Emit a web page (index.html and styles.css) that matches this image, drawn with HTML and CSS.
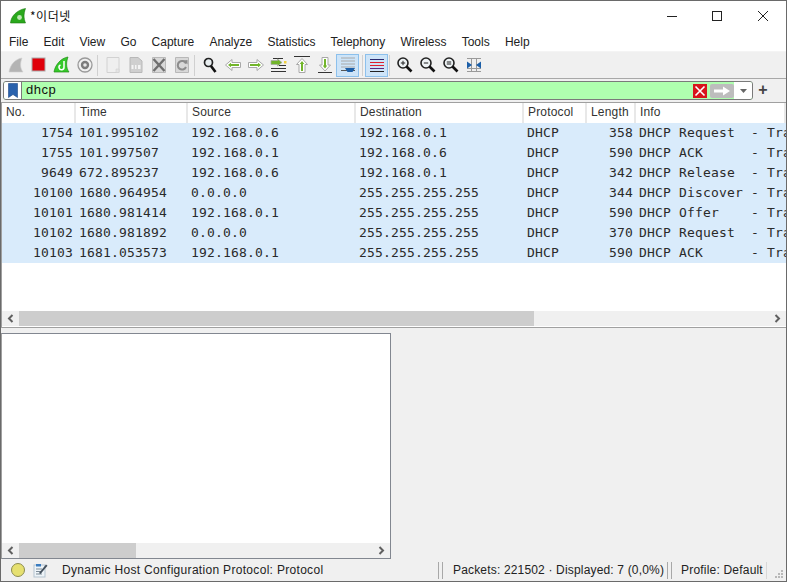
FILE: index.html
```html
<!DOCTYPE html>
<html lang="ko">
<head>
<meta charset="utf-8">
<title>*이더넷</title>
<link rel="stylesheet" href="styles.css">
</head>
<body>
<div class="window">
  <header class="titlebar">
    <svg class="app-icon" width="16" height="16" viewBox="0 0 16 16"><path d="M.5 15C1 8 7 2 15.5 .5C13.5 6 13.5 10 15.5 15Z" fill="#2aa81c" stroke="#1c7a12" stroke-width=".6"/><circle cx="9.5" cy="9.5" r="2.4" fill="#bfe8b5"/></svg>
    <span class="title">*이더넷</span>
    <div class="win-buttons">
      <span class="win-btn"><svg width="10" height="10" viewBox="0 0 10 10"><path d="M0 5.5H10" stroke="#222" fill="none"/></svg></span>
      <span class="win-btn"><svg width="10" height="10" viewBox="0 0 10 10"><rect x=".5" y=".5" width="9" height="9" stroke="#222" fill="none"/></svg></span>
      <span class="win-btn"><svg width="10" height="10" viewBox="0 0 10 10"><path d="M0 0L10 10M10 0L0 10" stroke="#222" fill="none"/></svg></span>
    </div>
  </header>
  <nav class="menubar">
    <span>File</span><span>Edit</span><span>View</span><span>Go</span><span>Capture</span><span>Analyze</span><span>Statistics</span><span>Telephony</span><span>Wireless</span><span>Tools</span><span>Help</span>
  </nav>
  <div class="toolbar">
    <span class="tool"><svg width="18" height="18" viewBox="0 0 18 18"><path d="M2 16C3 9 8 3 15 2C13 7 13 12 16 16Z" fill="#b4b4b4" stroke="#d0d0d0" stroke-width=".6"/></svg></span>
    <span class="tool"><svg width="18" height="18" viewBox="0 0 18 18"><rect x="2" y="2" width="13" height="13" fill="#e0000a" stroke="#a9a9a9"/></svg></span>
    <span class="tool"><svg width="18" height="18" viewBox="0 0 18 18"><path d="M1 16C2 9 8 2 15 1C13 6 13 12 16 16Z" fill="#35c92a" stroke="#1f8a16" stroke-width=".7"/><path d="M11 5V11A2.5 2.5 0 1 1 7.5 9" stroke="#fff" stroke-width="1.5" fill="none"/></svg></span>
    <span class="tool"><svg width="18" height="18" viewBox="0 0 18 18"><circle cx="9" cy="9" r="7" fill="#f0f0f0" stroke="#9a9a9a" stroke-width="1.3"/><circle cx="9" cy="9" r="4.2" fill="#7c7c7c"/><circle cx="9" cy="9" r="1.8" fill="#e8e8e8"/></svg></span>
    <span class="sep"></span>
    <span class="tool"><svg width="18" height="18" viewBox="0 0 18 18"><path d="M3 1.5H15V16.5H3Z" fill="#efefef" stroke="#d2d2d2"/><path d="M12 13H15V16.5H12Z" fill="#e4e4e4" stroke="#d2d2d2" stroke-width=".6"/></svg></span>
    <span class="tool"><svg width="18" height="18" viewBox="0 0 18 18"><path d="M3 1.5H11L15 5V16.5H3Z" fill="#cfcfcf" stroke="#b8b8b8"/><path d="M4.5 9H6.5V13H4.5ZM8 9H9.5V13H8ZM11 9H13.5V13H11Z" fill="#f4f4f4"/></svg></span>
    <span class="tool"><svg width="18" height="18" viewBox="0 0 18 18"><path d="M2.5 1.5H15.5V16.5H2.5Z" fill="#d8d8d8" stroke="#b8b8b8"/><path d="M3.5 3L14.5 15M14.5 3L3.5 15" stroke="#6e6e6e" stroke-width="2.4"/></svg></span>
    <span class="tool"><svg width="18" height="18" viewBox="0 0 18 18"><path d="M2.5 1.5H15.5V16.5H2.5Z" fill="#d8d8d8" stroke="#b8b8b8"/><path d="M13 7.5A4.3 4.3 0 1 0 13 11" stroke="#8c8c8c" stroke-width="2" fill="none"/><path d="M10.5 4.5L14.5 4V8.5Z" fill="#8c8c8c"/></svg></span>
    <span class="sep"></span>
    <span class="tool"><svg width="18" height="18" viewBox="0 0 18 18"><circle cx="7.5" cy="6.5" r="4" fill="#e8eef0" stroke="#222" stroke-width="1.7"/><path d="M10 10L14.5 16" stroke="#111" stroke-width="2.6"/></svg></span>
    <span class="tool"><svg width="18" height="18" viewBox="0 0 18 18"><path d="M1.5 9L8 3.5V6.5H16.5V11.5H8V14.5Z" fill="#fff" stroke="#a8a8a8"/><path d="M4 9L7 6.8V8H15V10H7V11.2Z" fill="#72b52a"/></svg></span>
    <span class="tool"><svg width="18" height="18" viewBox="0 0 18 18"><path d="M16.5 9L10 3.5V6.5H1.5V11.5H10V14.5Z" fill="#fff" stroke="#a8a8a8"/><path d="M14 9L11 6.8V8H3V10H11V11.2Z" fill="#72b52a"/></svg></span>
    <span class="tool"><svg width="18" height="18" viewBox="0 0 18 18"><path d="M3 2.5H13M1 15.5H16M1 12.5H16M9 9.5H16" stroke="#333" fill="none"/><path d="M12 6.5L7.5 3V4.5H1V8.5H7.5V10Z" fill="#72b52a" stroke="#a8a8a8" stroke-width=".7"/><rect x="14" y="5" width="2.5" height="2.5" fill="#f0d040"/></svg></span>
    <span class="tool"><svg width="18" height="18" viewBox="0 0 18 18"><path d="M1 .5H17" stroke="#333" fill="none"/><path d="M9 2.5L14.5 8.5H12V16.5H6V8.5H3.5Z" fill="#fff" stroke="#a8a8a8"/><path d="M9 5L11.3 8H10V15H8V8H6.7Z" fill="#72b52a"/></svg></span>
    <span class="tool"><svg width="18" height="18" viewBox="0 0 18 18"><path d="M2 16.5H16" stroke="#333" fill="none"/><path d="M9 15L14.5 9H12V1.5H6V9H3.5Z" fill="#fff" stroke="#a8a8a8"/><path d="M9 12.5L11.3 9.5H10V3H8V9.5H6.7Z" fill="#72b52a"/></svg></span>
    <span class="tool active"><svg width="18" height="18" viewBox="0 0 18 18"><path d="M2 2H16M2 5H16M2 8H16M2 11H16" stroke="#a8a8a8" fill="none"/><path d="M2 14.5H16" stroke="#555" fill="none"/><path d="M6 12H16L13.5 16H8.5Z" fill="#1c5fa8"/></svg></span>
    <span class="sep wide"></span>
    <span class="tool active"><svg width="18" height="18" viewBox="0 0 18 18"><path d="M2 3.5H16" stroke="#2a2a70"/><path d="M2 6.5H16" stroke="#e02030"/><path d="M2 9.5H16" stroke="#e02030"/><path d="M2 12.5H16" stroke="#5a2a80"/><path d="M2 15.5H16" stroke="#222"/></svg></span>
    <span class="sep"></span>
    <span class="tool"><svg width="18" height="18" viewBox="0 0 18 18"><circle cx="7" cy="7" r="5" fill="#eef3f5" stroke="#222" stroke-width="1.6"/><path d="M4.8 7H9.2M7 4.8V9.2" stroke="#222"/><path d="M10.5 10.5L15.5 15.5" stroke="#111" stroke-width="2.6"/></svg></span>
    <span class="tool"><svg width="18" height="18" viewBox="0 0 18 18"><circle cx="7" cy="7" r="5" fill="#eef3f5" stroke="#222" stroke-width="1.6"/><path d="M4.8 7H9.2" stroke="#222"/><path d="M10.5 10.5L15.5 15.5" stroke="#111" stroke-width="2.6"/></svg></span>
    <span class="tool"><svg width="18" height="18" viewBox="0 0 18 18"><circle cx="7" cy="7" r="5" fill="#eef3f5" stroke="#222" stroke-width="1.6"/><path d="M4.8 6H9.2M4.8 8H9.2" stroke="#222"/><path d="M10.5 10.5L15.5 15.5" stroke="#111" stroke-width="2.6"/></svg></span>
    <span class="tool"><svg width="18" height="18" viewBox="0 0 18 18"><path d="M2 2.5H16M2 15.5H16M2 12.5H16M6.5 2.5V15.5M11.5 2.5V15.5" stroke="#9a9a9a" fill="none"/><path d="M2 5.5L7 9L2 12.5ZM16 5.5L11 9L16 12.5Z" fill="#1c5fa8"/></svg></span>
  </div>
  <div class="filterbar">
    <div class="filter">
      <span class="bookmark"><svg width="10" height="15" viewBox="0 0 10 15"><path d="M.5 .5H9.5V14.5L5 11.5L.5 14.5Z" fill="#2a62ad" stroke="#1c4a8a" stroke-width=".6"/></svg></span>
      <span class="filter-text">dhcp</span>
      <span class="clear"><svg width="14" height="14" viewBox="0 0 14 14"><rect width="14" height="14" fill="#d8141c"/><path d="M2.5 2.5L11.5 11.5M11.5 2.5L2.5 11.5" stroke="#fff" stroke-width="1.6"/></svg></span>
      <span class="apply"><svg width="24" height="14" viewBox="0 0 24 14"><rect width="24" height="14" rx="2" fill="#bdbdbd"/><path d="M4 5.5H13V2.5L20 7L13 11.5V8.5H4Z" fill="#fff"/></svg></span>
      <span class="drop"><svg width="7" height="4" viewBox="0 0 7 4"><path d="M0 0H7L3.5 4Z" fill="#666"/></svg></span>
    </div>
    <span class="plus">+</span>
  </div>
  <section class="packets">
    <div class="row head">
      <span>No.</span><span>Time</span><span>Source</span><span>Destination</span><span>Protocol</span><span>Length</span><span>Info</span>
    </div>
    <div class="row data"><span class="num">1754</span><span>101.995102</span><span>192.168.0.6</span><span>192.168.0.1</span><span>DHCP</span><span class="num">358</span><span>DHCP Request  - Transaction</span></div>
    <div class="row data"><span class="num">1755</span><span>101.997507</span><span>192.168.0.1</span><span>192.168.0.6</span><span>DHCP</span><span class="num">590</span><span>DHCP ACK      - Transaction</span></div>
    <div class="row data"><span class="num">9649</span><span>672.895237</span><span>192.168.0.6</span><span>192.168.0.1</span><span>DHCP</span><span class="num">342</span><span>DHCP Release  - Transaction</span></div>
    <div class="row data"><span class="num">10100</span><span>1680.964954</span><span>0.0.0.0</span><span>255.255.255.255</span><span>DHCP</span><span class="num">344</span><span>DHCP Discover - Transaction</span></div>
    <div class="row data"><span class="num">10101</span><span>1680.981414</span><span>192.168.0.1</span><span>255.255.255.255</span><span>DHCP</span><span class="num">590</span><span>DHCP Offer    - Transaction</span></div>
    <div class="row data"><span class="num">10102</span><span>1680.981892</span><span>0.0.0.0</span><span>255.255.255.255</span><span>DHCP</span><span class="num">370</span><span>DHCP Request  - Transaction</span></div>
    <div class="row data"><span class="num">10103</span><span>1681.053573</span><span>192.168.0.1</span><span>255.255.255.255</span><span>DHCP</span><span class="num">590</span><span>DHCP ACK      - Transaction</span></div>
    <div class="spacer"></div>
    <div class="hscroll">
      <span class="arrow"><svg width="7" height="9" viewBox="0 0 7 9"><path d="M5.5 1L2 4.5L5.5 8" stroke="#606060" stroke-width="2" fill="none"/></svg></span>
      <span class="thumb thumb-list"></span>
      <span class="track"></span>
      <span class="arrow"><svg width="7" height="9" viewBox="0 0 7 9"><path d="M1.5 1L5 4.5L1.5 8" stroke="#606060" stroke-width="2" fill="none"/></svg></span>
    </div>
  </section>
  <div class="lower">
    <section class="details">
      <div class="spacer"></div>
      <div class="hscroll">
        <span class="arrow"><svg width="7" height="9" viewBox="0 0 7 9"><path d="M5.5 1L2 4.5L5.5 8" stroke="#606060" stroke-width="2" fill="none"/></svg></span>
        <span class="thumb thumb-details"></span>
        <span class="track"></span>
        <span class="arrow"><svg width="7" height="9" viewBox="0 0 7 9"><path d="M1.5 1L5 4.5L1.5 8" stroke="#606060" stroke-width="2" fill="none"/></svg></span>
      </div>
    </section>
  </div>
  <footer class="statusbar">
    <span class="led"></span>
    <svg class="note" width="15" height="15" viewBox="0 0 15 15"><rect x="1" y="2" width="11" height="12" fill="#eef4f8" stroke="#b5c4d0"/><path d="M3 6H9M3 8.5H9M3 11H9" stroke="#7d8c98"/><rect x="3" y="1" width="5" height="2.5" fill="#3a7cc0"/><path d="M6 10L13 1.5L14.5 2.8L7.5 11Z" fill="#44505c"/></svg>
    <span class="status-msg">Dynamic Host Configuration Protocol: Protocol</span>
    <span class="divider"></span>
    <span class="status-packets">Packets: 221502 · Displayed: 7 (0,0%)</span>
    <span class="divider"></span>
    <span class="status-profile">Profile: Default</span>
    <span class="divider single"></span>
    <svg class="grip" width="10" height="10" viewBox="0 0 10 10"><path d="M7 1h2v2H7zM4 4h2v2H4zM7 4h2v2H7zM1 7h2v2H1zM4 7h2v2H4zM7 7h2v2H7z" fill="#b8b8b8"/></svg>
  </footer>
</div>
</body>
</html>
```

FILE: styles.css
```css
* { box-sizing: border-box; }
html, body { margin: 0; padding: 0; }
body {
  width: 787px;
  height: 582px;
  overflow: hidden;
  font-family: "Liberation Sans", "Noto Sans CJK KR", sans-serif;
  font-size: 12px;
  color: #222;
}
.window {
  width: 787px;
  height: 582px;
  border: 1px solid #6a6a6a;
  background: #f0f0f0;
  display: flex;
  flex-direction: column;
}
.titlebar {
  height: 29px;
  flex: none;
  background: #fff;
  display: flex;
  align-items: center;
  padding-left: 9px;
}
.app-icon { flex: none; }
.title {
  margin-left: 4px;
  font-family: "Noto Sans CJK KR", sans-serif;
  font-size: 12px;
  letter-spacing: .5px;
  color: #111;
}
.win-buttons { margin-left: auto; display: flex; }
.win-btn {
  width: 46px;
  height: 29px;
  display: flex;
  align-items: center;
  justify-content: center;
}
.win-btn:first-child { width: 44px; }
.menubar {
  height: 22px;
  flex: none;
  background: #fff;
  display: flex;
  align-items: center;
  gap: 15.2px;
  padding: 2px 0 0 8px;
  border-bottom: 1px solid #f4f4f4;
}
.toolbar {
  height: 27px;
  flex: none;
  display: flex;
  align-items: center;
  padding-left: 3px;
  border-bottom: 1px solid #a8a8a8;
}
.tool {
  width: 23px;
  height: 23px;
  flex: none;
  display: flex;
  align-items: center;
  justify-content: center;
  border: 1px solid transparent;
}
.tool.active {
  background: #cde4f8;
  border-color: #8cc0ec;
}
.sep {
  width: 5px;
  height: 21px;
  flex: none;
  background: linear-gradient(#d0d0d0, #d0d0d0) no-repeat 1px 0 / 1px 100%;
}
.sep.wide { width: 6px; background-position: 3px 0; }
.filterbar {
  height: 23px;
  flex: none;
  display: flex;
  align-items: flex-start;
  padding: 2px 0 0 2px;
}
.filter {
  width: 750px;
  height: 19px;
  border: 1px solid #7a7a7a;
  border-radius: 3px;
  background: #afffaf;
  display: flex;
  align-items: center;
  overflow: hidden;
}
.bookmark {
  width: 18px;
  height: 17px;
  flex: none;
  background: #fff;
  border-right: 1px solid #7a7a7a;
  display: flex;
  align-items: center;
  justify-content: center;
}
.filter-text {
  margin-left: 4px;
  padding-bottom: 2px;
  font-size: 13px;
  letter-spacing: .5px;
  color: #111;
}
.clear { margin-left: auto; display: flex; flex: none; }
.apply { margin-left: 3px; display: flex; flex: none; }
.drop {
  width: 18px;
  height: 17px;
  flex: none;
  background: #fff;
  display: flex;
  align-items: center;
  justify-content: center;
}
.plus {
  width: 20px;
  text-align: center;
  font-size: 16px;
  line-height: 18px;
  font-weight: 700;
  color: #444;
}
.packets {
  height: 226px;
  flex: none;
  background: #fff;
  border: 1px solid #a0a0a0;
  border-width: 1px 0 1px 1px;
  display: flex;
  flex-direction: column;
  overflow: hidden;
}
.row {
  height: 20px;
  flex: none;
  display: grid;
  grid-template-columns: 74px 112px 168px 168px 63px 49px 1fr;
  align-items: center;
}
.row span {
  padding-left: 3px;
  white-space: pre;
  overflow: hidden;
}
.head { background: #fff; letter-spacing: .17px; color: #333; }
.head span {
  height: 20px;
  line-height: 18px;
  padding-left: 4px;
  border-right: 2px solid #e8e8e8;
}
.data {
  padding-bottom: 2px;
  background: #d9ebfb;
  font-family: "DejaVu Sans Mono", monospace;
  font-size: 13px;
  letter-spacing: .17px;
  color: #2a2a2a;
}
.row .num { text-align: right; padding: 0 3px 0 0; }
.spacer { flex: 1; background: #fff; }
.hscroll {
  height: 15px;
  flex: none;
  margin-bottom: 1px;
  background: #f0f0f0;
  display: flex;
  align-items: stretch;
}
.arrow {
  width: 17px;
  flex: none;
  display: flex;
  align-items: center;
  justify-content: center;
}
.thumb { flex: none; background: #cdcdcd; }
.thumb-list { width: 515px; }
.thumb-details { width: 117px; }
.track { flex: 1; }
.lower {
  flex: 1;
  padding-top: 5px;
  min-height: 0;
  display: flex;
}
.details {
  width: 390px;
  background: #fff;
  border: 1px solid #828790;
  border-left-color: #a0a0a0;
  display: flex;
  flex-direction: column;
}
.details .hscroll { margin-bottom: 0; }
.statusbar {
  height: 22px;
  flex: none;
  display: flex;
  align-items: center;
  padding-left: 10px;
  letter-spacing: .31px;
  white-space: nowrap;
  color: #222;
}
.led {
  width: 14px;
  height: 14px;
  flex: none;
  border-radius: 50%;
  background: #e6e070;
  border: 1px solid #8c8c50;
}
.note { margin-left: 8px; flex: none; }
.status-msg { margin-left: 14px; width: 376px; flex: none; }
.divider {
  width: 5px;
  height: 17px;
  flex: none;
  border-left: 1px solid #a8a8a8;
  border-right: 1px solid #a8a8a8;
}
.divider.single { width: 1px; border-right: none; border-left-color: #d8d8d8; }
.status-packets { margin-left: 10px; width: 214px; flex: none; letter-spacing: .17px; }
.status-profile { margin-left: 9px; width: 85px; flex: none; letter-spacing: .2px; }
.grip { margin-left: 7px; margin-top: 8px; flex: none; }
```
